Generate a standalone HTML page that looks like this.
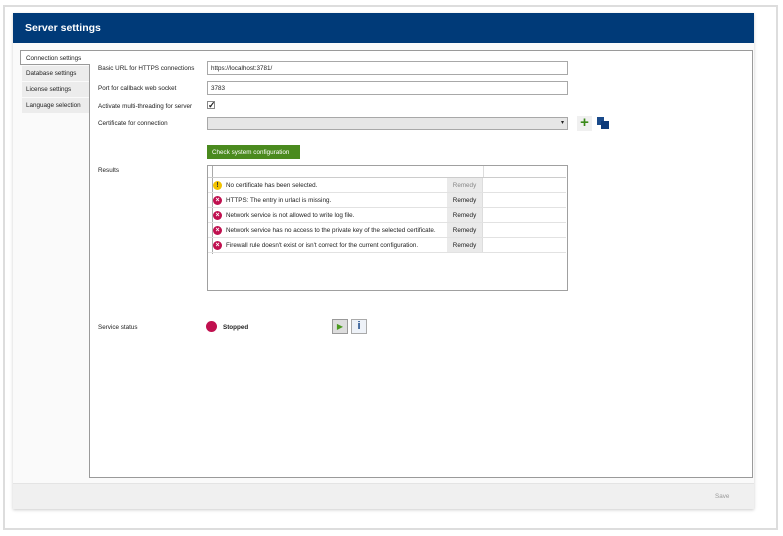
<!DOCTYPE html>
<html><head><style>
*{box-sizing:border-box;margin:0;padding:0}
body{width:783px;height:536px;background:#fff;font-family:"Liberation Sans",sans-serif;font-size:6.3px;color:#222;position:relative;overflow:hidden;white-space:nowrap}
.a{position:absolute}
.lbl{position:absolute;left:98px}
.inp{position:absolute;left:207px;width:361px;height:14px;border:1px solid #a8a8a8;background:#fff;padding:3px 3px}
.row{position:absolute;left:208px;width:358px;height:15px;border-bottom:1px solid #e2e2e2}
.row .ic{position:absolute;left:5px;top:3px;width:9px;height:9px;border-radius:50%;background:#c0104f;color:#fff;font-size:7px;line-height:9px;text-align:center;font-weight:bold}
.row .t{position:absolute;left:18px;top:4px}
.row .r{position:absolute;left:239px;top:0;width:36px;height:14px;background:#eaeaea;text-align:center;line-height:15px;border-right:1px solid #ddd}
</style></head><body>
<div class="a" style="left:3px;top:5px;width:775px;height:525px;border:2px solid #ddd"></div>
<div class="a" style="left:13px;top:13px;width:741px;height:496px;background:#fafafa;box-shadow:0 1px 3px #ccc"></div>
<div class="a" style="left:13px;top:13px;width:741px;height:30px;background:#003a78;color:#fff;font-size:10.5px;font-weight:bold;padding:9px 0 0 12px">Server settings</div>
<div class="a" style="left:89px;top:50px;width:664px;height:428px;background:#fff;border:1px solid #9a9a9a"></div>
<div class="a" style="left:20px;top:50px;width:70px;height:15px;background:#fff;border:1px solid #9a9a9a;border-right:none;padding:4px 5px">Connection settings</div>
<div class="a" style="left:22px;top:66px;width:67px;height:15px;background:#ececec;padding:4px 4px">Database settings</div>
<div class="a" style="left:22px;top:82px;width:67px;height:15px;background:#ececec;padding:4px 4px">License settings</div>
<div class="a" style="left:22px;top:98px;width:67px;height:15px;background:#ececec;padding:4px 4px">Language selection</div>
<div class="lbl" style="top:65px">Basic URL for HTTPS connections</div>
<div class="lbl" style="top:85px">Port for callback web socket</div>
<div class="lbl" style="top:103px">Activate multi-threading for server</div>
<div class="lbl" style="top:120px">Certificate for connection</div>
<div class="inp" style="top:61px">https://localhost:3781/</div>
<div class="inp" style="top:81px">3783</div>
<div class="a" style="left:207px;top:101px;width:8px;height:8px;border:1px solid #888;font-size:9px;line-height:7px;font-weight:bold">✓</div>
<div class="inp" style="top:117px;height:13px;background:#e6e6e6;text-align:right;padding:1px 3px;font-size:6px">▾</div>
<div class="a" style="left:577px;top:116px;width:15px;height:15px;background:#f0f0f0;color:#3a8a1a;font-size:15px;font-weight:bold;line-height:14px;text-align:center">+</div>
<div class="a" style="left:597px;top:117px;width:7px;height:8px;background:#1a4a8a"></div>
<div class="a" style="left:601px;top:121px;width:8px;height:8px;background:#0d3a7a"></div>
<div class="a" style="left:207px;top:145px;width:93px;height:14px;background:#4a8a1e;color:#fff;padding:4px 5px">Check system configuration</div>
<div class="lbl" style="top:167px">Results</div>
<div class="a" style="left:207px;top:165px;width:361px;height:126px;border:1px solid #a0a0a0;background:#fff"></div>
<div class="a" style="left:212px;top:166px;width:1px;height:88px;background:#aaa"></div>
<div class="a" style="left:208px;top:177px;width:358px;height:1px;background:#ccc"></div>
<div class="a" style="left:483px;top:166px;width:1px;height:11px;background:#ddd"></div>
<div class="row" style="top:178px"><div class="ic" style="background:#f2c200;color:#333">!</div><div class="t">No certificate has been selected.</div><div class="r" style="color:#888">Remedy</div></div>
<div class="row" style="top:193px"><div class="ic">×</div><div class="t">HTTPS: The entry in urlacl is missing.</div><div class="r">Remedy</div></div>
<div class="row" style="top:208px"><div class="ic">×</div><div class="t">Network service is not allowed to write log file.</div><div class="r">Remedy</div></div>
<div class="row" style="top:223px"><div class="ic">×</div><div class="t">Network service has no access to the private key of the selected certificate.</div><div class="r">Remedy</div></div>
<div class="row" style="top:238px"><div class="ic">×</div><div class="t">Firewall rule doesn't exist or isn't correct for the current configuration.</div><div class="r">Remedy</div></div>
<div class="lbl" style="top:324px">Service status</div>
<div class="a" style="left:206px;top:321px;width:11px;height:11px;border-radius:50%;background:#c0104f"></div>
<div class="a" style="left:223px;top:324px;font-weight:bold">Stopped</div>
<div class="a" style="left:332px;top:319px;width:16px;height:15px;background:#ddd;border:1px solid #999;color:#4a9a1e;font-size:8px;text-align:center;line-height:13px">▶</div>
<div class="a" style="left:351px;top:319px;width:16px;height:15px;background:#eef2f8;border:1px solid #aaa;color:#1a4a8a;font-size:11px;font-weight:bold;text-align:center;line-height:13px">i</div>
<div class="a" style="left:13px;top:483px;width:741px;height:26px;background:#f0f0f0;border-top:1px solid #e4e4e4"></div>
<div class="a" style="left:715px;top:493px;color:#999">Save</div>
</body></html>
